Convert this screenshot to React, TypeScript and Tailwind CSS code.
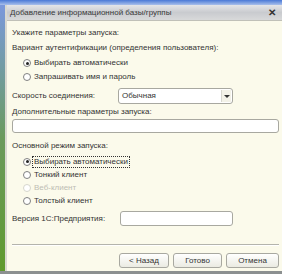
import React from "react";

const font = { fontFamily: '"Liberation Sans", Arial, sans-serif' };

function Radio({ label, checked = false, disabled = false, focused = false }: { label: string; checked?: boolean; disabled?: boolean; focused?: boolean }) {
    return (
        <div className="flex items-center h-[13px] pl-[11px]">
            <span className={`w-[8px] h-[8px] rounded-full border flex items-center justify-center bg-white ${disabled ? "border-[#d6d6cc]" : "border-[#808080]"}`}>
                {checked && <span className="w-[3px] h-[3px] rounded-full bg-[#222]" />}
            </span>
            <span
                className={`ml-[1px] px-[1px] leading-[10px] ${disabled ? "text-[#bdbdb4]" : "text-[#333]"} ${focused ? "border border-dotted border-[#333]" : "border border-transparent"}`}
            >
                {label}
            </span>
        </div>
    );
}

function Button({ label, w }: { label: string; w: string }) {
    return (
        <div className={`${w} h-[15px] rounded-[3px] border border-[#a8a8a0] bg-gradient-to-b from-white to-[#ebebe2] flex items-center justify-center text-[#333]`}>
            {label}
        </div>
    );
}

export default function App() {
    return (
        <div className="w-[282px] h-[274px] overflow-hidden flex flex-col text-[8px] bg-[#9aa0a0]" style={font}>
            {/* верхняя полоска рабочего стола */}
            <div className="h-[5px] bg-gradient-to-b from-[#4a78d6] to-[#a9bfea]" />
            <div className="flex flex-1">
                {/* фон слева */}
                <div className="w-[5px] bg-gradient-to-b from-[#7b98dc] via-[#6b9a5c] to-[#5f9a2c]" />
                {/* окно */}
                <div className="flex-1 flex flex-col border-l-[2px] border-[#d8d8d0] bg-[#fbfaeb]">
                    {/* заголовок */}
                    <div className="h-[16px] flex items-center justify-between pl-[3px] bg-gradient-to-b from-[#e4e5e8] via-[#c9cbcf] to-[#d8d9da] border-b border-[#c0c0b8]">
                        <span className="text-[#3a3a3a]">Добавление информационной базы/группы</span>
                        <span className="text-[#333] font-bold text-[10px] pr-[6px]">✕</span>
                    </div>

                    <div className="flex-1 flex flex-col pl-[5px] pr-[3px] text-[#333]">
                        <div className="mt-[5px] h-[14px] flex items-center">Укажите параметры запуска:</div>
                        <div className="mt-[1px] h-[14px] flex items-center">Вариант аутентификации (определения пользователя):</div>
                        <div className="mt-[1px]">
                            <div className="h-[14px] flex items-center"><Radio label="Выбирать автоматически" checked /></div>
                            <div className="h-[14px] flex items-center"><Radio label="Запрашивать имя и пароль" /></div>
                        </div>

                        <div className="mt-[4px] flex items-center">
                            <span className="w-[106px]">Скорость соединения:</span>
                            <div className="w-[115px] h-[16px] rounded-[3px] border border-[#a8a8a0] bg-white flex items-center">
                                <span className="flex-1 pl-[3px]">Обычная</span>
                                <span className="w-[10px] h-[12px] mr-[1px] border-l border-[#d8d8d0] bg-[#f3f2e8] flex items-center justify-center">
                                    <span className="w-0 h-0 border-l-[3px] border-r-[3px] border-t-[3px] border-l-transparent border-r-transparent border-t-[#333]" />
                                </span>
                            </div>
                        </div>

                        <div className="mt-[1px] h-[14px] flex items-center">Дополнительные параметры запуска:</div>
                        <div className="h-[14px] rounded-[3px] border border-[#a8a8a0] bg-white" />

                        <div className="mt-[6px] h-[14px] flex items-center">Основной режим запуска:</div>
                        <div className="mt-[2px]">
                            <Radio label="Выбирать автоматически" checked focused />
                            <Radio label="Тонкий клиент" />
                            <Radio label="Веб-клиент" disabled />
                            <Radio label="Толстый клиент" />
                        </div>

                        <div className="mt-[4px] flex items-center">
                            <span className="w-[108px]">Версия 1С:Предприятия:</span>
                            <div className="w-[113px] h-[15px] rounded-[3px] border border-[#a8a8a0] bg-white" />
                        </div>

                        <div className="mt-[18px] border-t border-[#b4b4ac] border-b border-b-white" />

                        <div className="mt-[7px] flex justify-end gap-[4px]">
                            <Button label="< Назад" w="w-[50px]" />
                            <Button label="Готово" w="w-[49px]" />
                            <Button label="Отмена" w="w-[53px]" />
                        </div>
                    </div>
                </div>
            </div>
            <div className="h-[3px] bg-[#8c9090]" />
        </div>
    );
}
